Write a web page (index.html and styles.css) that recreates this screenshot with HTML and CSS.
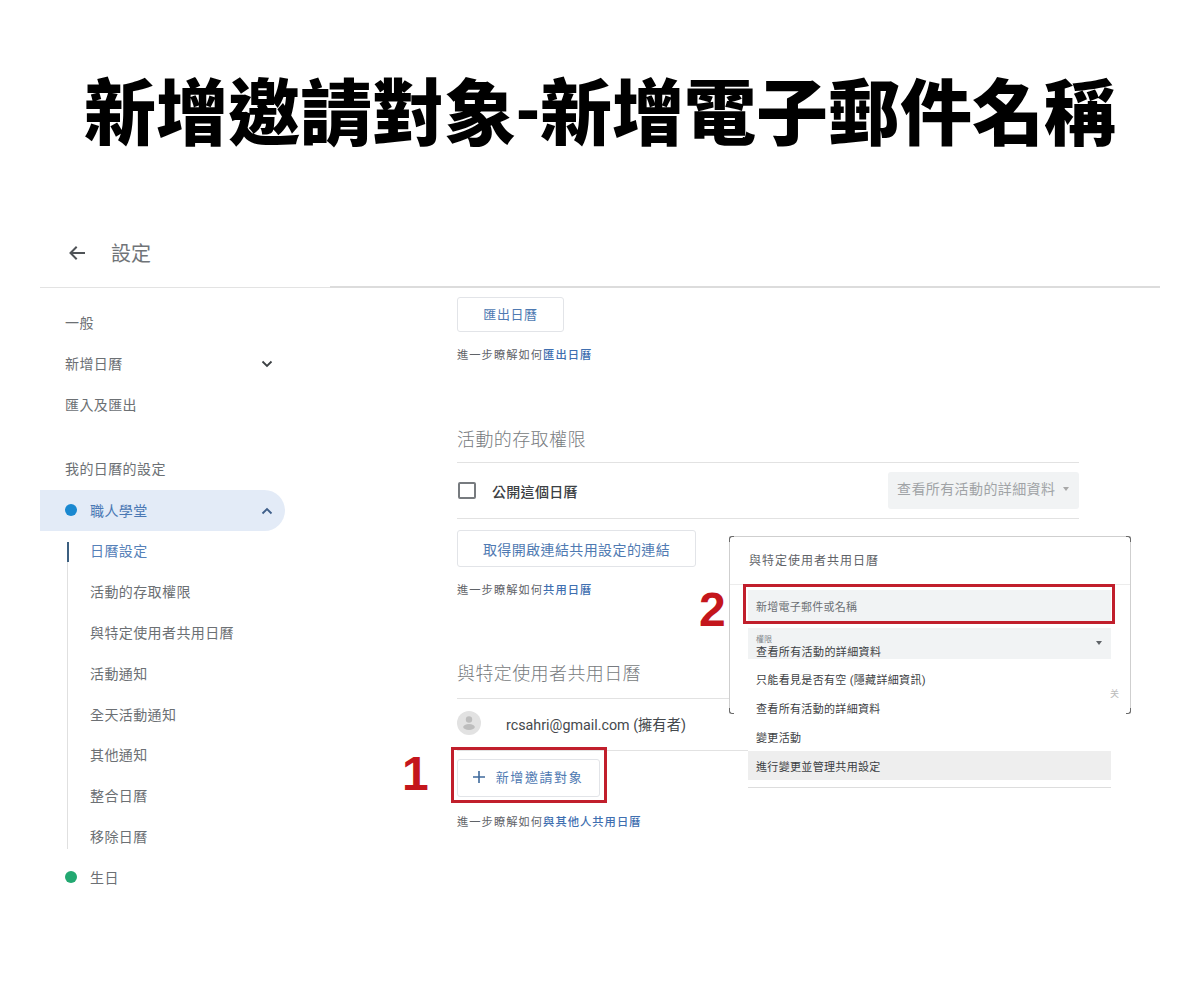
FILE: index.html
```html
<!DOCTYPE html>
<html lang="zh-Hant">
<head>
<meta charset="utf-8">
<title>新增邀請對象</title>
<link rel="stylesheet" href="styles.css">
</head>
<body>
<div class="page">
  <h1 class="title">新增邀請對象<span class="title-dash">-</span>新增電子郵件名稱</h1>
  <header class="bar">
    <svg class="back" viewBox="0 0 18 18" width="18" height="18"><path d="M17 9H2.5M8.7 2.8L2.5 9l6.2 6.2" fill="none" stroke="#4f5357" stroke-width="2"/></svg>
    <span class="bar-title">設定</span>
  </header>
  <div class="app">
    <nav class="side">
      <div class="row">一般</div>
      <div class="row row-split">新增日曆<svg class="chev" viewBox="0 0 12 8" width="12" height="8"><path d="M1.5 1.5L6 6l4.5-4.5" fill="none" stroke="#3c4043" stroke-width="1.8"/></svg></div>
      <div class="row">匯入及匯出</div>
      <div class="row row-group">我的日曆的設定</div>
      <div class="row row-split row-active">
        <span class="cal"><i class="dot dot-blue"></i>職人學堂</span>
        <svg class="chev" viewBox="0 0 12 8" width="12" height="8"><path d="M1.5 6.5L6 2l4.5 4.5" fill="none" stroke="#3f5f8a" stroke-width="1.8"/></svg>
      </div>
      <div class="sub">
        <div class="sub-row sub-current">日曆設定</div>
        <div class="sub-row">活動的存取權限</div>
        <div class="sub-row">與特定使用者共用日曆</div>
        <div class="sub-row">活動通知</div>
        <div class="sub-row">全天活動通知</div>
        <div class="sub-row">其他通知</div>
        <div class="sub-row">整合日曆</div>
        <div class="sub-row">移除日曆</div>
      </div>
      <div class="row"><span class="cal"><i class="dot dot-green"></i>生日</span></div>
    </nav>
    <main class="main">
      <div class="btn btn-export">匯出日曆</div>
      <p class="help">進一步瞭解如何<span class="link">匯出日曆</span></p>

      <h2 class="section section-first">活動的存取權限</h2>
      <div class="public">
        <label class="public-label"><i class="box"></i>公開這個日曆</label>
        <div class="public-select">查看所有活動的詳細資料<i class="caret caret-grey"></i></div>
      </div>
      <div class="btn btn-link">取得開啟連結共用設定的連結</div>
      <p class="help">進一步瞭解如何<span class="link">共用日曆</span></p>

      <h2 class="section section-next">與特定使用者共用日曆</h2>
      <div class="owner">
        <svg class="avatar" viewBox="0 0 24 24" width="24" height="24"><circle cx="12" cy="12" r="12" fill="#e2e2e2"/><circle cx="12" cy="8.5" r="3.2" fill="#bdbdbd"/><ellipse cx="12" cy="16" rx="5.8" ry="3" fill="#bdbdbd"/></svg>
        <span class="owner-name">rcsahri@gmail.com (擁有者)</span>
      </div>
      <div class="btn btn-add"><svg class="plus" viewBox="0 0 14 14" width="14" height="14"><path d="M7 1v12M1 7h12" stroke="#3f6a9c" stroke-width="1.6" fill="none"/></svg>新增邀請對象</div>
      <p class="help help-last">進一步瞭解如何<span class="link">與其他人共用日曆</span></p>
    </main>
  </div>

  <section class="dialog">
    <i class="corner corner-tl"></i><i class="corner corner-tr"></i><i class="corner corner-bl"></i><i class="corner corner-br"></i>
    <div class="dialog-title">與特定使用者共用日曆</div>
    <div class="dialog-body">
      <div class="field">新增電子郵件或名稱</div>
      <div class="perm">
        <div><div class="perm-label">權限</div><div class="perm-value">查看所有活動的詳細資料</div></div>
        <i class="caret caret-dark"></i>
      </div>
      <ul class="menu">
        <li class="menu-item">只能看見是否有空 (隱藏詳細資訊)</li>
        <li class="menu-item">查看所有活動的詳細資料</li>
        <li class="menu-item">變更活動</li>
        <li class="menu-item menu-selected">進行變更並管理共用設定</li>
      </ul>
    </div>
    <span class="stray">关</span>
  </section>

  <div class="mark mark-one"></div>
  <div class="mark mark-two"></div>
  <span class="num num-one">1</span>
  <span class="num num-two">2</span>
</div>
</body>
</html>
```

FILE: styles.css
```css
* { box-sizing: border-box; }
html, body { margin: 0; padding: 0; background: #fff; }
body { font-family: Roboto, "Noto Sans CJK TC", sans-serif; color: #5f6368; }
.page { position: relative; width: 1200px; height: 1000px; overflow: hidden; }

.title {
  height: 224px; margin: 0; padding-bottom: 9px; display: flex; align-items: center; justify-content: center;
  font-family: "Noto Sans CJK TC", sans-serif; font-weight: 900; font-size: 72px; line-height: 1;
  color: #000; letter-spacing: 0; white-space: nowrap;
}
.title-dash { font-family: "Liberation Sans", Arial, sans-serif; font-weight: 700; }

.bar {
  position: relative; height: 64px; margin: 0 40px; padding: 0 0 6px 28px;
  display: flex; align-items: center; gap: 25px; border-bottom: 1px solid #e3e3e3;
}
.bar::after {
  content: ""; position: absolute; left: 290px; right: 0; bottom: -1px; height: 2px; background: #dcdcdc;
}
.bar-title { font-size: 20px; letter-spacing: 0; color: #707478; }
.back { flex: none; }

.app { display: flex; }
.side { width: 245px; margin-left: 40px; padding-top: 15px; flex: none; }
.row {
  height: 41px; padding: 0 12px 3px 25px; display: flex; align-items: center;
  font-size: 14px; letter-spacing: .4px; color: #6c7074;
}
.row-split { justify-content: space-between; }
.row-group { margin-top: 23px; }
.row-active { background: #e3ebf7; border-radius: 0 21px 21px 0; color: #4a78b4; padding-bottom: 2px; }
.chev { flex: none; margin-top: 2px; }
.cal { display: flex; align-items: center; gap: 13px; }
.dot { width: 12px; height: 12px; border-radius: 50%; flex: none; }
.dot-blue { background: #1a88d0; }
.dot-green { background: #22a871; }

.sub { position: relative; }
.sub::before {
  content: ""; position: absolute; left: 27px; top: 11px; bottom: 9px; width: 1px; background: #e0e0e0;
}
.sub-row {
  position: relative; height: 40.9px; padding: 0 0 3px 50px; display: flex; align-items: center;
  font-size: 14px; letter-spacing: .4px; color: #6c7074;
}
.sub-current { color: #5580b8; }
.sub-current::before {
  content: ""; position: absolute; left: 27px; top: 11px; width: 2px; height: 20px; background: #3c5f80;
}

.main { width: 622px; margin-left: 172px; flex: none; }
.btn {
  display: flex; align-items: center; justify-content: center; width: max-content;
  border: 1px solid #e2e4e8; border-radius: 3px; color: #4f7ab2; font-size: 14px; background: #fff;
}
.btn-export { margin-top: 9px; width: 107px; height: 35px; padding-bottom: 3px; font-size: 13px; letter-spacing: .6px; }
.btn-link { margin-top: 11px; width: 239px; height: 37px; letter-spacing: .4px; }
.btn-add { margin-top: 8px; width: 143px; height: 38px; padding: 0 2px 4px 0; gap: 10px; font-size: 13px; letter-spacing: 1.6px; }
.plus { flex: none; margin-top: 2px; }
.help { margin: 15px 0 0; height: 18px; font-size: 11.3px; line-height: 18px; color: #5f6368; white-space: nowrap; letter-spacing: 1px; }
.help-last { margin-top: 17px; }
.link { color: #3f6fb0; font-weight: 500; }

.section {
  margin: 0; height: 38px; line-height: 30px; font-weight: 300; font-size: 18px;
  letter-spacing: .4px; color: #777b80; border-bottom: 1px solid #e2e2e2;
}
.section-first { margin-top: 60px; }
.section-next { margin-top: 59px; height: 40px; }

.public {
  height: 56px; display: flex; align-items: center; justify-content: space-between;
  border-bottom: 1px solid #e2e2e2;
}
.public-label { display: flex; align-items: center; gap: 16px; font-size: 14px; font-weight: 500; letter-spacing: .3px; color: #3c4043; }
.box { width: 18px; height: 17px; border: 2px solid #777b7f; border-radius: 2px; margin-left: 1px; flex: none; }
.public-select {
  width: 191px; height: 37px; padding: 0 9px 5px; display: flex; align-items: center; gap: 8px;
  background: #f1f3f4; border-radius: 3px; font-size: 14px; letter-spacing: .4px; color: #a0a3a6;
}
.caret { width: 0; height: 0; border-left: 3.5px solid transparent; border-right: 3.5px solid transparent; flex: none; }
.caret-grey { border-top: 4px solid #a8a8a8; margin-top: 2px; }
.caret-dark { border-top: 4px solid #5f6368; }

.owner {
  height: 52px; padding-bottom: 3px; display: flex; align-items: center; gap: 25px;
  border-bottom: 1px solid #e2e2e2;
}
.avatar { flex: none; }
.owner-name { font-size: 14.3px; color: #45494d; }

.dialog {
  position: absolute; left: 729px; top: 536px; width: 402px; height: 178px;
  border: 1px solid #cfcfcf; border-bottom-color: #fff; border-radius: 3px; background: #fff;
}
.corner { position: absolute; width: 5px; height: 6px; border: 0 solid #6a6a6a; }
.corner-tl { left: -1px; top: -1px; border-width: 1.5px 0 0 1.5px; border-top-left-radius: 3px; }
.corner-tr { right: -1px; top: -1px; border-width: 1.5px 1.5px 0 0; border-top-right-radius: 3px; }
.corner-bl { left: -1px; bottom: -1px; border-width: 0 0 1.5px 1.5px; border-bottom-left-radius: 3px; }
.corner-br { right: -1px; bottom: -1px; border-width: 0 1.5px 1.5px 0; border-bottom-right-radius: 3px; }
.dialog-title {
  height: 48px; padding: 0 0 2px 19px; display: flex; align-items: center;
  font-size: 12px; letter-spacing: 1px; color: #5f6368; border-bottom: 1px solid #ececec;
}
.dialog-body { width: 363px; margin-left: 18px; position: relative; }
.field {
  margin-top: 5px; height: 32px; padding-left: 8px; display: flex; align-items: center;
  background: #f1f3f4; font-size: 11px; letter-spacing: .25px; color: #6b6f73;
}
.perm {
  margin-top: 6px; height: 31px; padding: 7px 8px 0; display: flex; justify-content: space-between;
  background: #f1f3f4; color: #3c4043; overflow: hidden;
}
.perm .caret { margin: 6px 1px 0 0; }
.perm-label { font-size: 8px; line-height: 9px; color: #80868b; }
.perm-value { margin-top: 2px; font-size: 11px; line-height: 14px; letter-spacing: .4px; }
.menu { list-style: none; margin: 6px 0 0; padding: 0 0 7px; background: #fff; border-bottom: 1px solid #ddd; }
.menu-item {
  height: 28.75px; padding-left: 8px; display: flex; align-items: center;
  font-size: 11px; letter-spacing: .33px; color: #3c4043; white-space: nowrap;
}
.menu-selected { background: #eeeeee; }
.stray { position: absolute; left: 380px; top: 151px; font-size: 9px; line-height: 12px; color: #bbb; }

.mark { position: absolute; border: 3px solid #c11f2c; }
.mark-one { left: 451px; top: 747px; width: 156px; height: 56px; }
.mark-two { left: 743px; top: 584px; width: 372px; height: 40px; }
.num {
  position: absolute; font-family: "Liberation Sans", Arial, sans-serif; font-weight: 700;
  font-size: 48px; line-height: 48px; color: #c4161c;
}
.num-one { left: 402px; top: 750px; }
.num-two { left: 699px; top: 586px; }
```
